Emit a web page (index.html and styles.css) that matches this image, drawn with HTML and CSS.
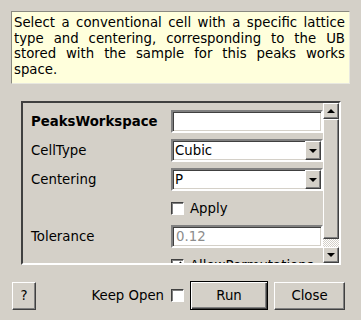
FILE: index.html
```html
<!DOCTYPE html>
<html lang="en">
<head>
  <meta charset="UTF-8">
  <title>FindUBUsingLatticeParameters</title>
  <link rel="stylesheet" href="styles.css">
</head>
<body>

  <div class="tip">
    <span class="line">Select a conventional cell with a specific lattice</span>
    <span class="line">type and centering, corresponding to the UB</span>
    <span class="line">stored with the sample for this peaks works</span>
    <span class="line last">space.</span>
  </div>

  <div class="panel">
    <div class="rows">
      <div class="row">
        <span class="label bold">PeaksWorkspace</span>
        <span class="field"></span>
      </div>
      <div class="row">
        <span class="label">CellType</span>
        <span class="field combo">Cubic<span class="drop"><i class="arrow down"></i></span></span>
      </div>
      <div class="row">
        <span class="label">Centering</span>
        <span class="field combo">P<span class="drop"><i class="arrow down"></i></span></span>
      </div>
      <div class="row short">
        <span class="label"></span>
        <span class="check"></span>
        <span class="check-text">Apply</span>
      </div>
      <div class="row">
        <span class="label">Tolerance</span>
        <span class="field muted">0.12</span>
      </div>
      <div class="row">
        <span class="label"></span>
        <span class="check">
          <svg width="9" height="9" viewBox="0 0 9 9"><polyline points="1,4 3,7 8,1" fill="none" stroke="#000" stroke-width="1.6"/></svg>
        </span>
        <span class="check-text">AllowPermutations</span>
      </div>
    </div>
    <div class="scrollbar">
      <span class="sb-btn"><i class="arrow up"></i></span>
      <span class="sb-handle"></span>
      <span class="sb-trough"></span>
      <span class="sb-btn"><i class="arrow down"></i></span>
    </div>
  </div>

  <div class="buttons">
    <button class="btn help">?</button>
    <span class="keep">Keep Open</span>
    <span class="check"></span>
    <button class="btn run">Run</button>
    <button class="btn close">Close</button>
  </div>

</body>
</html>
```

FILE: styles.css
```css
* {
  box-sizing: border-box;
  margin: 0;
  padding: 0;
}

body {
  background-color: #d4d0c8;
  font-family: "DejaVu Sans", sans-serif;
  font-size: 13.3px;
  color: #000;
  width: 361px;
  height: 320px;
  overflow: hidden;
}

/* tooltip */
.tip {
  margin: 11px 11px 0 11px;
  height: 73px;
  padding: 3px 4px 0 2px;
  background-color: #ffffdc;
  border: 1px solid #8a8a80;
  border-right-color: #e8e8e0;
  border-bottom-color: #e8e8e0;
  line-height: 15.5px;
}

.tip .line {
  display: block;
  text-align: justify;
  text-align-last: justify;
}

.tip .line.last {
  text-align-last: left;
}

/* scroll panel */
.panel {
  margin: 17px 0 0 21px;
  width: 320px;
  height: 164px;
  display: flex;
  border: 2px solid;
  border-color: #404040 #fff #fff #404040;
  box-shadow: inset -1px -1px #d4d0c8;
}

.rows {
  flex: 1;
  overflow: hidden;
  padding: 7px 0 0 8px;
  display: flex;
  flex-direction: column;
  gap: 6px;
}

.row {
  display: flex;
  align-items: center;
  height: 23px;
  flex-shrink: 0;
}

.row.short {
  height: 22px;
}

.label {
  width: 140px;
  flex-shrink: 0;
  white-space: nowrap;
}

.bold {
  font-weight: bold;
}

.field {
  position: relative;
  width: 152px;
  height: 23px;
  background-color: #fff;
  border: 2px solid;
  border-color: #808080 #fff #fff #808080;
  box-shadow: inset 1px 1px #404040, inset -1px -1px #d4d0c8;
  padding: 0 0 0 2px;
  line-height: 19px;
  white-space: nowrap;
}

.muted {
  color: #8c8c8c;
  padding-left: 3px;
}

.combo .drop {
  position: absolute;
  right: 0;
  top: 0;
  width: 16px;
  height: 19px;
  background-color: #d4d0c8;
  border: 1px solid;
  border-color: #fff #404040 #404040 #fff;
  box-shadow: inset -1px -1px #808080;
  display: flex;
  align-items: center;
  justify-content: center;
}

.arrow {
  display: block;
  width: 0;
  height: 0;
  border-left: 4px solid transparent;
  border-right: 4px solid transparent;
}

.arrow.down {
  border-top: 4px solid #000;
}

.arrow.up {
  border-bottom: 4px solid #000;
}

.check {
  width: 13px;
  height: 13px;
  flex-shrink: 0;
  background-color: #fff;
  border: 1px solid;
  border-color: #404040 #fff #fff #404040;
  box-shadow: inset 1px 1px #808080;
  display: flex;
  align-items: center;
  justify-content: center;
}

.check-text {
  margin-left: 6px;
  white-space: nowrap;
}

/* scrollbar */
.scrollbar {
  width: 16px;
  flex-shrink: 0;
  display: flex;
  flex-direction: column;
}

.sb-btn,
.sb-handle {
  background-color: #d4d0c8;
  border: 1px solid;
  border-color: #fff #404040 #404040 #fff;
  box-shadow: inset -1px -1px #808080;
}

.sb-btn {
  height: 16px;
  display: flex;
  align-items: center;
  justify-content: center;
}

.sb-handle {
  height: 120px;
}

.sb-trough {
  height: 8px;
  background-color: #d4d0c8;
  background-image: repeating-conic-gradient(#fff 0 25%, #d4d0c8 0 50%);
  background-size: 2px 2px;
}

/* bottom buttons */
.buttons {
  display: flex;
  align-items: center;
  height: 29px;
  margin-top: 16px;
  padding: 0 16px 0 12px;
}

.btn {
  font-family: "DejaVu Sans", sans-serif;
  font-size: 13.3px;
  color: #000;
  background-color: #d4d0c8;
  border: 1px solid;
  border-color: #fff #404040 #404040 #fff;
  box-shadow: inset -1px -1px #808080;
  height: 28px;
}

.help {
  width: 24px;
}

.keep {
  margin-left: auto;
  margin-right: 7px;
}

.run {
  width: 78px;
  height: 29px;
  margin-left: 6px;
  border: 1px solid #000;
  box-shadow: inset 1px 1px #fff, inset -1px -1px #404040, inset -2px -2px #808080;
}

.close {
  width: 71px;
  margin-left: 6px;
}
```
